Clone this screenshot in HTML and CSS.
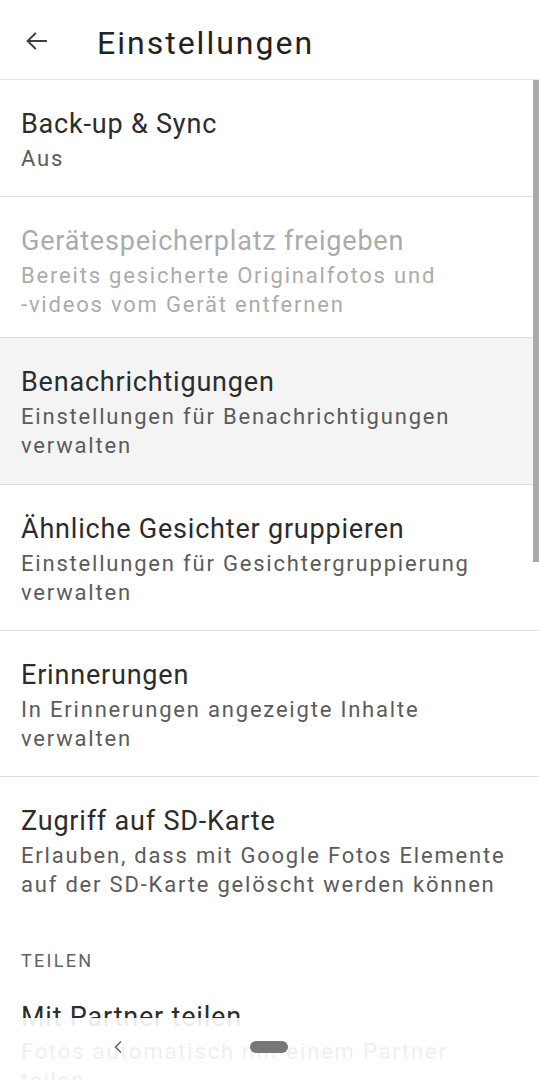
FILE: index.html
```html
<!DOCTYPE html>
<html lang="de">
<head>
    <meta charset="UTF-8">
    <meta name="viewport" content="width=device-width, initial-scale=1.0">
    <title>Einstellungen</title>
    <link rel="stylesheet" href="styles.css">
</head>
<body>
    <header class="app-bar">
        <button class="back-button" aria-label="Zurück">
            <svg width="28" height="28" viewBox="0 0 24 24" fill="none" stroke="#3c3c3c" stroke-width="1.7">
                <path d="M20.5 12H4"/>
                <path d="M11 5l-7 7 7 7"/>
            </svg>
        </button>
        <h1>Einstellungen</h1>
    </header>

    <main class="settings">
        <div class="row">
            <div class="row-title">Back-up &amp; Sync</div>
            <div class="row-sub">Aus</div>
        </div>
        <div class="row row-disabled row-tight">
            <div class="row-title">Gerätespeicherplatz freigeben</div>
            <div class="row-sub">Bereits gesicherte Originalfotos und<br>-videos vom Gerät entfernen</div>
        </div>
        <div class="row row-pressed">
            <div class="row-title">Benachrichtigungen</div>
            <div class="row-sub">Einstellungen für Benachrichtigungen<br>verwalten</div>
        </div>
        <div class="row">
            <div class="row-title">Ähnliche Gesichter gruppieren</div>
            <div class="row-sub">Einstellungen für Gesichtergruppierung<br>verwalten</div>
        </div>
        <div class="row">
            <div class="row-title">Erinnerungen</div>
            <div class="row-sub">In Erinnerungen angezeigte Inhalte<br>verwalten</div>
        </div>
        <div class="row row-last">
            <div class="row-title">Zugriff auf SD-Karte</div>
            <div class="row-sub">Erlauben, dass mit Google Fotos Elemente<br>auf der SD-Karte gelöscht werden können</div>
        </div>

        <div class="section-label">TEILEN</div>

        <div class="row row-last">
            <div class="row-title">Mit Partner teilen</div>
            <div class="row-sub">Fotos automatisch mit einem Partner<br>teilen</div>
        </div>
    </main>

    <div class="scroll-thumb"></div>

    <nav class="system-nav">
        <svg class="nav-back" width="12" height="14" viewBox="0 0 12 14" fill="none" stroke="#6a6a6a" stroke-width="1.6">
            <path d="M9 1.5L3.5 7 9 12.5"/>
        </svg>
        <div class="nav-pill"></div>
    </nav>
</body>
</html>
```

FILE: styles.css
```css
* {
    margin: 0;
    padding: 0;
    box-sizing: border-box;
}

body {
    font-family: Roboto, 'Noto Sans', sans-serif;
    background: #fff;
    color: #303030;
    width: 539px;
    height: 1080px;
    overflow: hidden;
    position: relative;
}

.app-bar {
    height: 80px;
    display: flex;
    align-items: center;
    border-bottom: 1px solid #e6e6e6;
}

.back-button {
    width: 28px;
    height: 28px;
    margin-left: 23px;
    margin-top: 2px;
    border: none;
    background: none;
    display: flex;
}

.app-bar h1 {
    margin-left: 46px;
    margin-top: 6px;
    font-size: 32px;
    font-weight: 400;
    color: #222;
    letter-spacing: 2px;
}

.row {
    padding: 28px 21px 23px;
    border-bottom: 1px solid #dedede;
}

.row-tight {
    padding-bottom: 18px;
}

.row-pressed {
    background: #f4f4f4;
    padding-bottom: 24px;
}

.row-last {
    border-bottom: none;
    padding-bottom: 24px;
}

.row-title {
    font-size: 27px;
    line-height: 32px;
    color: #2c2c2c;
    letter-spacing: 0.8px;
}

.row-sub {
    margin-top: 4px;
    font-size: 22px;
    line-height: 29px;
    color: #5b5b5b;
    letter-spacing: 1.8px;
}

.row-disabled .row-title,
.row-disabled .row-sub {
    color: #ababab;
}

.section-label {
    padding: 26px 21px 0;
    font-size: 18px;
    line-height: 24px;
    letter-spacing: 2.3px;
    color: #5f6368;
}

.scroll-thumb {
    position: absolute;
    right: 0;
    top: 80px;
    width: 6px;
    height: 482px;
    background: #a9a9ab;
}

.system-nav {
    position: absolute;
    left: 0;
    bottom: 0;
    width: 100%;
    height: 62px;
    background: rgba(255, 255, 255, 0.9);
}

.nav-back {
    position: absolute;
    left: 112px;
    top: 22px;
}

.nav-pill {
    position: absolute;
    left: 250px;
    top: 23px;
    width: 38px;
    height: 12px;
    border-radius: 6px;
    background: #777;
}
```
